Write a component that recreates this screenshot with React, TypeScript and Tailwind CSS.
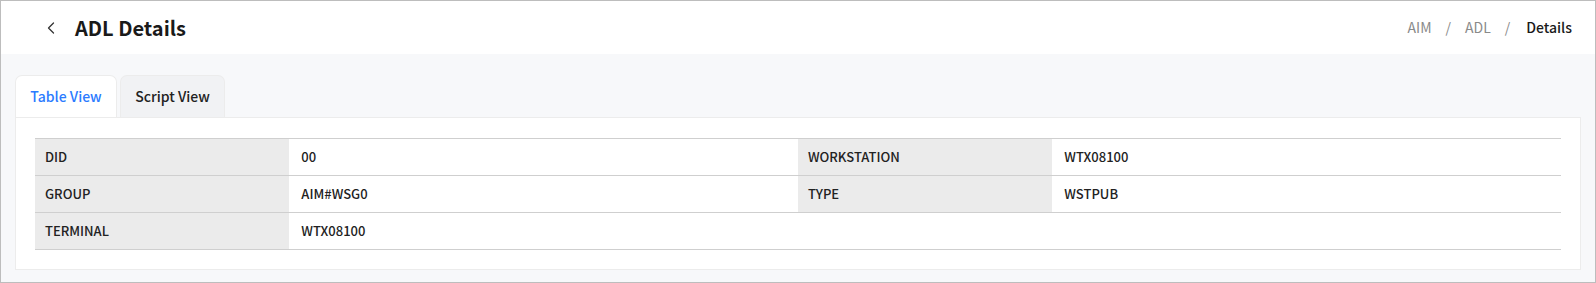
import { ChevronLeft } from "lucide-react";

const rows = [
  [
    { label: "DID", value: "00" },
    { label: "WORKSTATION", value: "WTX08100" },
  ],
  [
    { label: "GROUP", value: "AIM#WSG0" },
    { label: "TYPE", value: "WSTPUB" },
  ],
  [{ label: "TERMINAL", value: "WTX08100" }],
];

export default function App() {
  return (
    <div
      className="h-[283px] w-full border border-[#bdbdbd] bg-[#f7f8fa] flex flex-col text-[#222]"
      style={{ fontFamily: '"Noto Sans CJK KR", "Noto Sans", sans-serif' }}
    >
      <header className="h-[53px] bg-white flex items-center justify-between pl-[40px] pr-[23px]">
        <div className="flex items-center gap-[14px]">
          <ChevronLeft className="w-[20px] h-[20px] text-[#333]" strokeWidth={1.5} />
          <h1 className="text-[20px] font-bold text-[#1a1a1a] leading-none">ADL Details</h1>
        </div>
        <nav className="flex items-center gap-[14px] text-[14px]">
          <span className="text-[#8a8a8a]">AIM</span>
          <span className="text-[#8a8a8a]">/</span>
          <span className="text-[#8a8a8a]">ADL</span>
          <span className="text-[#8a8a8a]">/</span>
          <span className="text-[#1a1a1a] font-medium ml-[2px]">Details</span>
        </nav>
      </header>

      <main className="flex-1 px-[14px] pt-[21px]">
        <div className="flex items-end gap-[3px]">
          <button className="h-[42px] w-[102px] rounded-t-[7px] bg-white border border-b-0 border-[#ececec] text-[14px] font-medium text-[#2b7bff]">
            Table View
          </button>
          <button className="h-[42px] w-[105px] rounded-t-[7px] bg-[#f1f2f4] border border-b-0 border-[#ececec] text-[14px] font-medium text-[#222]">
            Script View
          </button>
        </div>
        <div className="bg-white border border-[#ececec] h-[153px] px-[19px] pt-[20px]">
          <div className="border-t border-[#cfcfcf]">
            {rows.map((row, i) => (
              <div key={i} className="grid grid-cols-[1fr_2fr_1fr_2fr] h-[37px] border-b border-[#cfcfcf] text-[13px] font-medium">
                {row.map((c) => (
                  <div key={c.label} className="contents">
                    <div className="bg-[#ebebeb] flex items-center pl-[10px]">{c.label}</div>
                    <div className="flex items-center pl-[12px]">{c.value}</div>
                  </div>
                ))}
              </div>
            ))}
          </div>
        </div>
      </main>
    </div>
  );
}
